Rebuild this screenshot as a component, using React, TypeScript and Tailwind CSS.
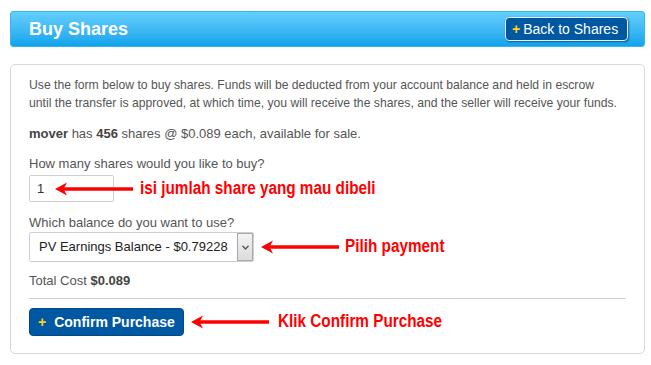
import { useState } from "react";

function RedArrow() {
  return (
    <svg width="78" height="14" viewBox="0 0 78 14" className="shrink-0">
      <line x1="7" y1="7" x2="78" y2="7" stroke="#ff0000" strokeWidth="3.5" />
      <polygon points="0,7 12,0.5 8.5,7 12,13.5" fill="#ff0000" />
    </svg>
  );
}

// annotation text: bold, condensed look
function Note({ children }: { children: React.ReactNode }) {
  return (
    <span className="inline-block origin-left scale-x-[0.85] text-[18px] font-bold leading-none text-[#ff0000] whitespace-nowrap">
      {children}
    </span>
  );
}

export default function App() {
  const [qty, setQty] = useState("1");
  const [balance, setBalance] = useState("pv");

  return (
    <div className="min-h-screen w-full bg-white pt-[11px] pl-[10px] font-['Liberation_Sans',Arial,sans-serif]">
      <div className="w-[635px]">
        {/* header */}
        <div className="flex h-[36px] items-center justify-between rounded-[3px] border border-[#3cb5ec] bg-linear-to-b from-[#62cffd] to-[#08a4ec] pl-[18px] pr-[16px]">
          <h1 className="text-[18px] font-bold leading-none text-white">Buy Shares</h1>
          <button className="flex h-[24px] w-[123px] items-center rounded-[4px] border border-[#e6eef7] bg-[#0058a3] pl-[6px] text-[14px] text-white shadow-[1px_1px_2px_rgba(0,0,0,0.45)]">
            <span className="mr-[3px] font-bold text-[#ffd21a]">+</span>Back to Shares
          </button>
        </div>

        {/* form panel */}
        <div className="mt-[17px] rounded-[5px] border border-[#d9d9d9] px-[18px] pt-[11px] pb-[17px] text-[13px] leading-[18px] text-[#555]">
          <p className="whitespace-nowrap text-[12.2px]">
            Use the form below to buy shares. Funds will be deducted from your account balance and held in escrow
            <br />
            until the transfer is approved, at which time, you will receive the shares, and the seller will receive your funds.
          </p>

          <p className="mt-[13px]">
            <b className="text-[#444]">mover</b> has <b className="text-[#444]">456</b> shares @ $0.089 each, available for sale.
          </p>

          <p className="mt-[12px]">How many shares would you like to buy?</p>
          <div className="mt-[2px] flex items-center">
            <input
              value={qty}
              onChange={(e) => setQty(e.target.value)}
              className="h-[27px] w-[85px] shrink-0 rounded-[2px] border border-[#cfcfcf] bg-white px-[7px] text-[13px] text-[#333] outline-none"
            />
            <div className="-ml-[59px] flex items-center">
              <RedArrow />
            </div>
            <span className="ml-[7px]">
              <Note>isi jumlah share yang mau dibeli</Note>
            </span>
          </div>

          <p className="mt-[12px]">Which balance do you want to use?</p>
          <div className="flex items-center">
            <div className="flex h-[30px] w-[225px] shrink-0 overflow-hidden rounded-[2px] border border-[#cfcfcf] bg-white">
              <select
                value={balance}
                onChange={(e) => setBalance(e.target.value)}
                className="flex-1 appearance-none bg-white pl-[9px] text-[13px] text-[#222] outline-none"
              >
                <option value="pv">PV Earnings Balance - $0.79228</option>
                <option value="cash">Cash Balance - $0.00000</option>
              </select>
              <span className="flex w-[16px] items-center justify-center border border-[#a9a9a9] bg-linear-to-b from-[#f4f4f4] to-[#dcdcdc]">
                <svg width="7" height="5" viewBox="0 0 7 5">
                  <polyline points="0.5,0.8 3.5,4 6.5,0.8" fill="none" stroke="#555" strokeWidth="1.3" />
                </svg>
              </span>
            </div>
            <div className="ml-[7px] flex items-center">
              <RedArrow />
            </div>
            <span className="ml-[6px]">
              <Note>Pilih payment</Note>
            </span>
          </div>

          <p className="mt-[10px]">
            Total Cost <b className="text-[#444]">$0.089</b>
          </p>

          <hr className="mt-[8px] border-t border-[#d0d0d0]" />

          <div className="mt-[9px] flex items-center">
            <button className="flex h-[28px] w-[155px] shrink-0 items-center rounded-[4px] border border-[#00498a] bg-[#0058a3] pl-[8px] text-[14px] font-bold text-white">
              <span className="mr-[8px] text-[#ffd21a]">+</span>Confirm Purchase
            </button>
            <div className="ml-[7px] flex items-center">
              <RedArrow />
            </div>
            <span className="ml-[9px]">
              <Note>Klik Confirm Purchase</Note>
            </span>
          </div>
        </div>
      </div>
    </div>
  );
}
